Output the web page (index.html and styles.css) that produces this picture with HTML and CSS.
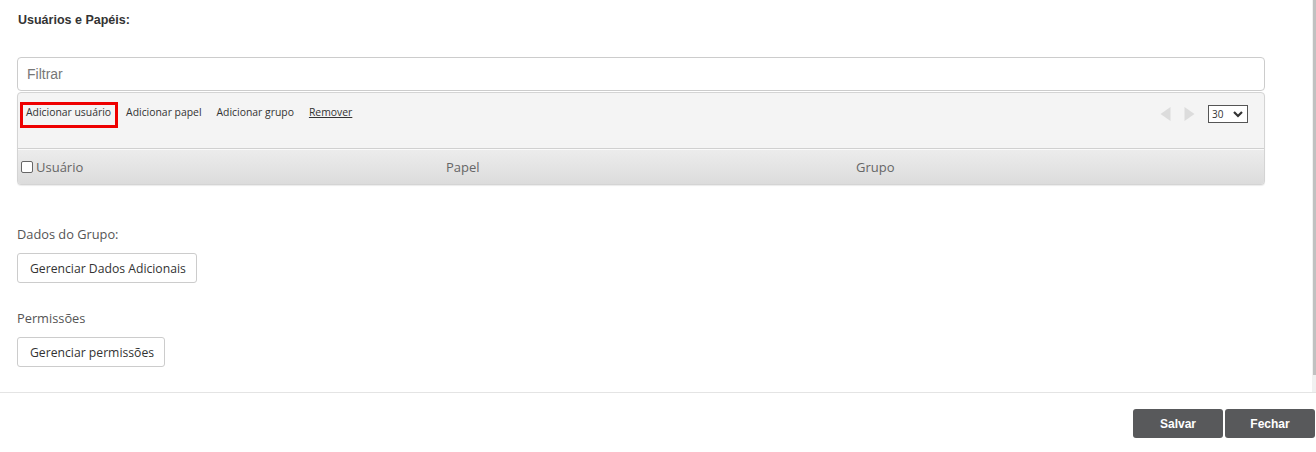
FILE: index.html
```html
<!DOCTYPE html>
<html lang="pt">
<head>
<meta charset="utf-8">
<title>Usuários e Papéis</title>
<link rel="stylesheet" href="styles.css">
</head>
<body>
<div class="page">
  <div class="scroll-area">
    <main class="content">
      <h2 class="title">Usuários e Papéis:</h2>
      <input class="filter" type="text" placeholder="Filtrar">
      <div class="grid-box">
        <div class="toolbar">
          <div class="actions">
            <a class="action highlighted">Adicionar usuário</a>
            <a class="action">Adicionar papel</a>
            <a class="action">Adicionar grupo</a>
            <a class="action underline">Remover</a>
          </div>
          <div class="pager">
            <svg class="arrow" width="11" height="14" viewBox="0 0 11 14"><path d="M10.5 0 L10.5 14 L0.5 7 Z" fill="#dcdcdc"/></svg>
            <svg class="arrow" width="11" height="14" viewBox="0 0 11 14"><path d="M0.5 0 L0.5 14 L10.5 7 Z" fill="#dcdcdc"/></svg>
            <div class="page-size"><span>30</span><svg width="10" height="7" viewBox="0 0 10 7"><path d="M1 1 L5 5 L9 1" fill="none" stroke="#333" stroke-width="2.2"/></svg></div>
          </div>
        </div>
        <div class="header-row">
          <div class="col col-user"><span class="checkbox"></span>Usuário</div>
          <div class="col col-role">Papel</div>
          <div class="col col-group">Grupo</div>
        </div>
      </div>
      <section class="block block-first">
        <div class="label">Dados do Grupo:</div>
        <button class="btn">Gerenciar Dados Adicionais</button>
      </section>
      <section class="block">
        <div class="label">Permissões</div>
        <button class="btn">Gerenciar permissões</button>
      </section>
    </main>
    <div class="scrollbar"><div class="thumb"></div></div>
  </div>
  <footer class="footer">
    <button class="btn-dark">Salvar</button>
    <button class="btn-dark">Fechar</button>
  </footer>
</div>
</body>
</html>
```
FILE: styles.css
```css
html, body {
  margin: 0;
  padding: 0;
  background: #fff;
}
body {
  font-family: "Open Sans", "Liberation Sans", sans-serif;
  color: #333;
}
.page {
  width: 1316px;
  height: 452px;
  display: flex;
  flex-direction: column;
}
.scroll-area {
  height: 393px;
  flex: none;
  display: flex;
  border-bottom: 1px solid #e4e4e4;
  box-sizing: border-box;
}
.content {
  flex: 1;
  padding: 13px 47px 0 17px;
}
.scrollbar {
  width: 4px;
  background: #f1f1f1;
  display: flex;
  justify-content: flex-end;
}
.thumb {
  width: 3px;
  height: 375px;
  background: #c1c1c1;
}
.title {
  margin: 0 0 0 1px;
  font-family: "Liberation Sans", Arial, sans-serif;
  font-weight: bold;
  font-size: 12.5px;
  line-height: 14px;
  color: #333;
}
.filter {
  display: block;
  margin-top: 30px;
  width: 100%;
  height: 34px;
  box-sizing: border-box;
  border: 1px solid #ccc;
  border-radius: 4px;
  padding: 0 9px;
  font-family: "Liberation Sans", Arial, sans-serif;
  font-size: 14px;
  color: #333;
  outline: none;
}
.filter::placeholder {
  color: #777;
}
.grid-box {
  margin-top: 1px;
  border: 1px solid #d4d4d4;
  border-radius: 4px;
  background: #f4f4f4;
  box-shadow: 0 1px 1px rgba(0,0,0,0.08);
  overflow: hidden;
}
.toolbar {
  height: 56px;
  display: flex;
  justify-content: space-between;
  align-items: flex-start;
  padding: 9px 16px 0 2px;
  box-sizing: border-box;
  border-bottom: 1px solid #d0d0d0;
}
.actions {
  display: flex;
  align-items: flex-start;
}
.action {
  font-size: 10.4px;
  line-height: 14px;
  color: #333;
  padding: 0 4px 6px 3px;
  border: 3px solid transparent;
  cursor: pointer;
}
.action + .action {
  margin-left: 2px;
}
.action.highlighted {
  border-color: #ee0000;
}
.action.underline {
  text-decoration: underline;
}
.pager {
  display: flex;
  align-items: center;
  gap: 13px;
  padding-top: 3px;
}
.arrow {
  display: block;
}
.page-size {
  width: 40px;
  height: 18px;
  box-sizing: border-box;
  border: 1px solid #555;
  background: #fff;
  display: flex;
  align-items: center;
  justify-content: space-between;
  padding: 0 4px 0 3px;
  font-size: 10px;
  color: #333;
}
.header-row {
  height: 35px;
  box-sizing: border-box;
  display: flex;
  align-items: center;
  background: linear-gradient(#ececec, #dcdcdc);
  border-top: 1px solid #fafafa;
  font-size: 13px;
  color: #666;
}
.col {
  display: flex;
  align-items: center;
}
.col-user {
  width: 428px;
  padding-left: 3px;
  box-sizing: border-box;
}
.col-role {
  width: 410px;
}
.col-group {
  flex: 1;
}
.checkbox {
  width: 12px;
  height: 12px;
  border: 1px solid #666;
  border-radius: 2px;
  background: #fff;
  margin-right: 3px;
  box-sizing: border-box;
}
.block {
  margin-top: 26px;
}
.block-first {
  margin-top: 40px;
}
.label {
  font-size: 12.8px;
  line-height: 18px;
  color: #555;
}
.btn {
  margin-top: 10px;
  display: block;
  height: 30px;
  padding: 0 10px 0 12px;
  background: #fff;
  border: 1px solid #ccc;
  border-radius: 3px;
  font-family: "Open Sans", "Liberation Sans", sans-serif;
  font-size: 12.2px;
  color: #333;
}
.footer {
  display: flex;
  justify-content: flex-end;
  gap: 2px;
  padding: 16px 1px 0 0;
}
.btn-dark {
  width: 90px;
  height: 29px;
  border: none;
  border-radius: 3px;
  background: #58595b;
  color: #fff;
  font-family: "Liberation Sans", Arial, sans-serif;
  font-weight: bold;
  font-size: 12px;
}
```
